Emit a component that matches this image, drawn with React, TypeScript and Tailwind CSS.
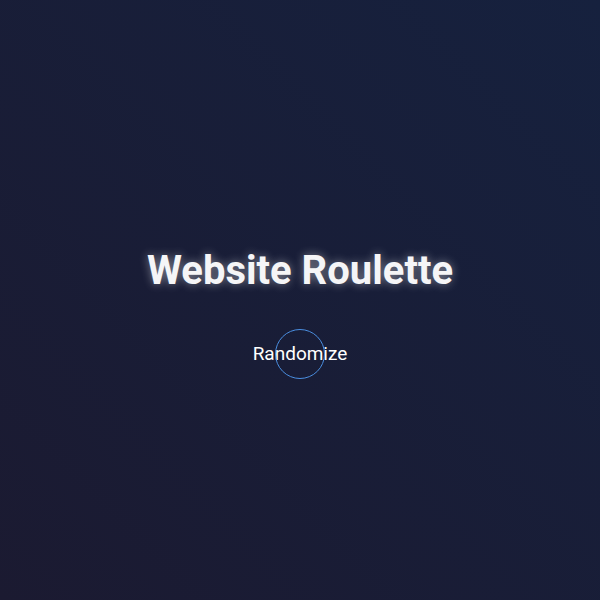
import React from "react";

export default function App() {
  return (
    <div
      className="w-[600px] h-[600px] flex flex-col items-center justify-center bg-[linear-gradient(45deg,#1b1a31,#16213e)]"
      style={{ fontFamily: "Roboto, 'Liberation Sans', sans-serif" }}
    >
      <h1 className="text-[40px] font-bold text-[#f5f5f7] leading-none [text-shadow:0_0_10px_rgba(255,255,255,0.45)] mt-[22px]">
        Website Roulette
      </h1>
      <button className="relative mt-[45px] px-3 py-2 text-[19px] text-white bg-transparent leading-none">
        Randomize
        <span className="absolute left-1/2 top-1/2 w-[50px] h-[50px] -translate-x-1/2 -translate-y-1/2 rounded-full border border-[#4a8ee0]" />
      </button>
    </div>
  );
}
